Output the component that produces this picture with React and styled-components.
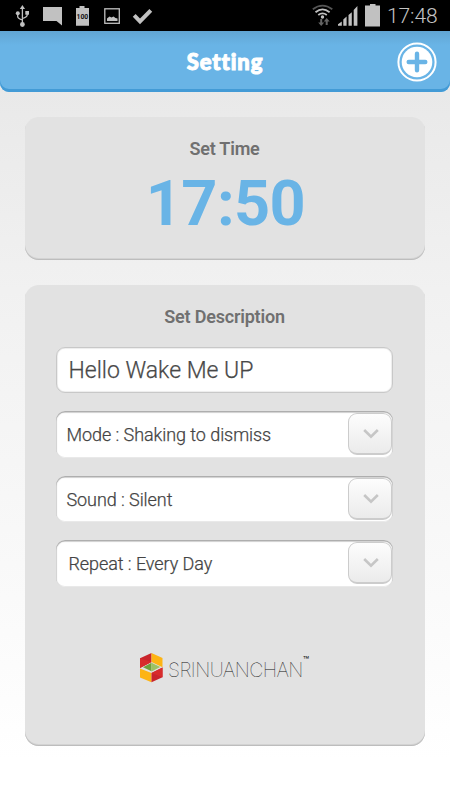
import React from 'react';
import styled, { createGlobalStyle } from 'styled-components';

const GlobalStyle = createGlobalStyle`
  * {
    box-sizing: border-box;
  }
  body {
    margin: 0;
    font-family: Roboto, "Noto Sans", sans-serif;
  }
`;

const Screen = styled.div`
  width: 450px;
  height: 800px;
  overflow: hidden;
  display: flex;
  flex-direction: column;
  background: linear-gradient(#e9e9e9 90px, #f1f1f1 290px, #fdfdfd 700px, #ffffff 760px);
`;

const StatusBar = styled.div`
  height: 31px;
  flex: none;
  background: #000;
  display: flex;
  justify-content: space-between;
  > svg {
    display: block;
  }
`;

const StatusRight = styled.div`
  display: flex;
`;

const Clock = styled.div`
  width: 65px;
  padding-left: 2px;
  color: #c4c4c4;
  font-size: 21px;
  font-weight: 300;
  line-height: 32px;
  letter-spacing: -0.1px;
  white-space: nowrap;
`;

const Header = styled.div`
  height: 61px;
  flex: none;
  display: grid;
  grid-template-columns: 66px 1fr 66px;
  align-items: center;
  justify-items: center;
  background: linear-gradient(#61a5d3, #69b4e6 14px);
  border-radius: 0 0 9px 9px;
  box-shadow: inset 0 -3px 0 #439bd6;
`;

const Title = styled.h1`
  grid-column: 2;
  margin: 0;
  color: #fff;
  font-family: Lato, sans-serif;
  font-size: 22px;
  font-weight: 900;
  -webkit-text-stroke: 1px #fff;
  letter-spacing: 0.9px;
`;

const AddButton = styled.button`
  display: block;
  padding: 0;
  border: 0;
  background: none;
  > svg {
    display: block;
  }
`;

const Main = styled.div`
  display: flex;
  flex-direction: column;
  gap: 25px;
  padding: 25px 25px 0;
`;

const Card = styled.section`
  height: ${props => props.height};
  padding: 20px 32px 0 31px;
  display: flex;
  flex-direction: column;
  align-items: center;
  background: #e2e2e2;
  border-radius: 14px;
  box-shadow: inset 0 -1px 0 #bdbdbd, inset 0 -2px 0 #d3d3d3;
`;

const Label = styled.h2`
  margin: 0;
  color: #707070;
  font-size: 18px;
  font-weight: 600;
  line-height: 23px;
  letter-spacing: -0.2px;
`;

const Time = styled.div`
  margin-top: 7px;
  padding-left: 2px;
  color: #69b4e6;
  font-size: 63px;
  font-weight: 700;
  line-height: 74px;
  letter-spacing: -0.6px;
`;

const NameField = styled.div`
  width: 337px;
  height: 46px;
  flex: none;
  margin-top: 19px;
  padding-left: 11.5px;
  background: #fff;
  border: 1.5px solid #c8c8c8;
  border-radius: 9px;
  box-shadow: inset 0 0 1px 0.5px #dedede;
  color: #484848;
  font-size: 23px;
  font-weight: 300;
  -webkit-text-stroke: 0.25px #484848;
  line-height: 46px;
  letter-spacing: 0;
`;

const SelectList = styled.div`
  display: flex;
  flex-direction: column;
  gap: 18px;
  margin-top: 18px;
`;

const Select = styled.div`
  width: 337px;
  height: 46.5px;
  padding: 2px 1px 0 ${props => props.indent || '10.5px'};
  display: flex;
  justify-content: space-between;
  background: #fff;
  border-radius: 9px;
  box-shadow: inset 0 1px 1px 0.5px #aaaaaa, inset 0 -1px 0 #ededed;
  color: #444;
  font-size: 18px;
  font-weight: 300;
  -webkit-text-stroke: 0.25px #444;
  line-height: 44px;
  letter-spacing: -0.07px;
`;

const Arrow = styled.span`
  width: 44px;
  height: 42px;
  display: flex;
  align-items: center;
  justify-content: center;
  padding: 1px 0 0 2px;
  background: linear-gradient(#fdfdfd, #ebebeb);
  border: 1.5px solid #cccccc;
  border-bottom-width: 2px;
  border-radius: 9px;
`;

const Brand = styled.div`
  display: flex;
  margin-top: 66px;
  > svg {
    display: block;
  }
`;

const BrandName = styled.div`
  display: flex;
  margin-left: 5px;
  color: #111;
  font-family: Inter, sans-serif;
  font-size: 19.5px;
  font-weight: 100;
  line-height: 34px;
  letter-spacing: -0.55px;
  > sup {
    font-size: 10px;
    font-weight: 400;
    line-height: 15px;
    letter-spacing: 0;
  }
`;

const Notifications = () => (
    <svg width="160" height="31" viewBox="0 0 160 31" fill="#c1c1c1">
        <g stroke="#c1c1c1" strokeWidth="1.3" fill="none">
            <path d="M22.4 8v16M17.7 14v2.5q0 2 4.7 3.5M27.2 13v2q0 2-4.8 3.5" />
        </g>
        <path d="M22.4 5l2.6 4h-5.2z" />
        <rect x="25.3" y="11" width="3.7" height="3.7" />
        <circle cx="17.8" cy="13.2" r="2" />
        <circle cx="22.4" cy="24.5" r="2.4" />
        <path d="M43 7h19v18.5L56.5 21H43z" />
        <path d="M79.5 6h5v2H89v17.8H76V8h3.5z" />
        <text x="82.4" y="18.5" textAnchor="middle" fill="#111" fontSize="6.8" fontWeight="700">100</text>
        <rect x="104.8" y="8.8" width="14.5" height="14.5" fill="none" stroke="#c1c1c1" strokeWidth="1.3" />
        <path d="M107 21v-2.5l2.5-2 2 1 2-1 2 1.5 2 .5V21z" />
        <path d="M134.2 15.4l5.8 5.9L150.8 10.3" fill="none" stroke="#c1c1c1" strokeWidth="4" />
    </svg>
);

const Signals = () => (
    <svg width="75" height="31" viewBox="310 0 75 31" fill="#c1c1c1">
        <g fill="none" strokeWidth="1.8">
            <path d="M312.8 9.2Q322.5 2 332.3 9.2" stroke="#555" />
            <path d="M315.5 12.2Q322.5 6.6 329.6 12.2" stroke="#c1c1c1" />
            <path d="M318.3 15Q322.5 11.8 326.8 15" stroke="#c1c1c1" />
        </g>
        <circle cx="322.5" cy="17" r="1.7" />
        <path d="M320.2 19h2v3.5h2l-3 3.5-3-3.5h2zM325.7 25v-3.5h-2l3-3.5 3 3.5h-2V25z" fill="#656565" />
        <path d="M338 25.7v-1.5l3.8-2.7v4.2zM343.3 25.7v-6.3l3.3-2.8v9.1zM348.5 25.7V15l3.3-2.8v13.5zM353.7 25.7V10l3.7-4v19.7z" />
        <path d="M370 4h5.5v1.5h4.5v21h-15v-21h5z" />
    </svg>
);

const PlusIcon = () => (
    <svg width="40" height="40" viewBox="0 0 40 40">
        <circle cx="20" cy="20" r="18.6" fill="none" stroke="#fff" strokeWidth="2" />
        <circle cx="20" cy="20" r="15.3" fill="#fff" />
        <path d="M20 11.7v16.6M11.7 20h16.6" stroke="#69b4e6" strokeWidth="4.4" strokeLinecap="round" />
    </svg>
);

const Chevron = () => (
    <svg width="16" height="12" viewBox="0 0 16 12">
        <path d="M1.2 2L8 8.7 14.8 2" fill="none" stroke="#c6c6c6" strokeWidth="2.6" />
    </svg>
);

const BrandMark = () => (
    <svg width="23" height="30" viewBox="0 0 23 30">
        <path d="M0 5.2L11.5 0v9L0 15z" fill="#c9252c" />
        <path d="M0 5.2L11.5 9 0 15z" fill="#d82c2c" />
        <path d="M11.5 0L22.5 5v9.3L11.5 9z" fill="#fdb414" />
        <path d="M11.5 9.7v8.6L3 14.3z" fill="#6fa13c" />
        <path d="M11.5 9.7l8.8 4.4-8.8 4.4z" fill="#9cc265" />
        <path d="M0 15.4L11.5 20v9.3L0 24.5z" fill="#fdb414" />
        <path d="M11.5 20l11-5.4v9.7l-11 5z" fill="#c9252c" />
        <path d="M11.5 20l11-5.4v9.7z" fill="#d82c2c" />
    </svg>
);

const SelectRow = ({ label, indent }) => (
    <Select indent={indent}>
        {label}
        <Arrow><Chevron /></Arrow>
    </Select>
);

function App() {
    return (
        <Screen>
            <GlobalStyle />
            <StatusBar>
                <Notifications />
                <StatusRight>
                    <Signals />
                    <Clock>17:48</Clock>
                </StatusRight>
            </StatusBar>
            <Header>
                <Title>Setting</Title>
                <AddButton aria-label="Add"><PlusIcon /></AddButton>
            </Header>
            <Main>
                <Card height="143px">
                    <Label>Set Time</Label>
                    <Time>17:50</Time>
                </Card>
                <Card height="461px">
                    <Label>Set Description</Label>
                    <NameField>Hello Wake Me UP</NameField>
                    <SelectList>
                        <SelectRow label="Mode : Shaking to dismiss" />
                        <SelectRow label="Sound : Silent" />
                        <SelectRow label="Repeat : Every Day" indent="12.5px" />
                    </SelectList>
                    <Brand>
                        <BrandMark />
                        <BrandName>SRINUANCHAN<sup>™</sup></BrandName>
                    </Brand>
                </Card>
            </Main>
        </Screen>
    );
}

export default App;
